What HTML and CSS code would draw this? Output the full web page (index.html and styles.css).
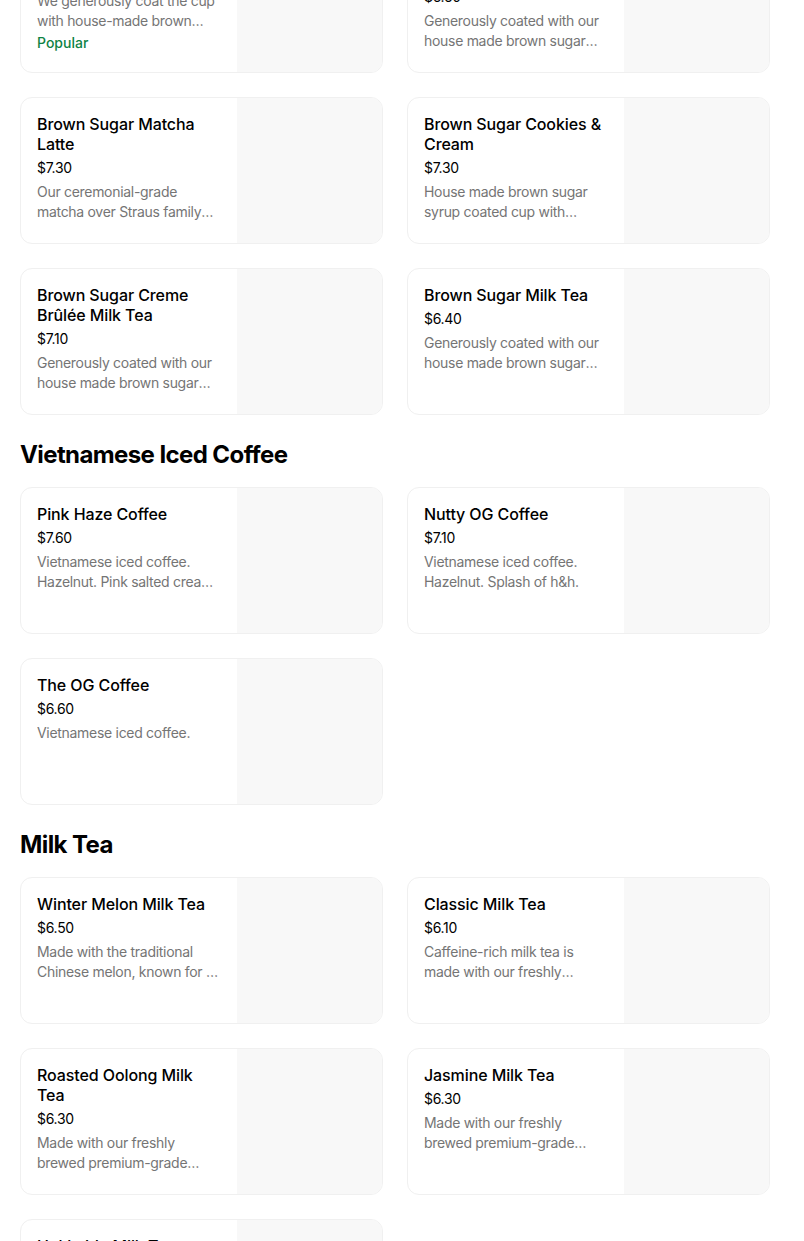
FILE: index.html
```html
<!DOCTYPE html>
<html lang="en">
<head>
<meta charset="utf-8">
<title>Menu</title>
<link rel="stylesheet" href="styles.css">
</head>
<body>
<main class="menu">
  <section class="section section-first">
    <div class="grid">
      <div class="card">
        <div class="info">
          <div class="title">Brown Sugar Boba Latte</div>
          <div class="price">$6.90</div>
          <div class="desc">We generously coat the cup with house-made brown sugar syrup and add our fresh boba.</div>
          <div class="tag">Popular</div>
        </div>
        <div class="thumb"></div>
      </div>
      <div class="card">
        <div class="info">
          <div class="title">Brown Sugar Boba Milk Tea Latte</div>
          <div class="price">$6.60</div>
          <div class="desc">Generously coated with our house made brown sugar syrup and fresh boba.</div>
        </div>
        <div class="thumb"></div>
      </div>
      <div class="card">
        <div class="info">
          <div class="title">Brown Sugar Matcha Latte</div>
          <div class="price">$7.30</div>
          <div class="desc">Our ceremonial-grade matcha over Straus family farm milk with brown sugar.</div>
        </div>
        <div class="thumb"></div>
      </div>
      <div class="card">
        <div class="info">
          <div class="title">Brown Sugar Cookies &amp; Cream</div>
          <div class="price">$7.30</div>
          <div class="desc">House made brown sugar syrup coated cup with cookies and cream.</div>
        </div>
        <div class="thumb"></div>
      </div>
      <div class="card">
        <div class="info">
          <div class="title">Brown Sugar Creme Brûlée Milk Tea</div>
          <div class="price">$7.10</div>
          <div class="desc">Generously coated with our house made brown sugar syrup and creme brûlée foam.</div>
        </div>
        <div class="thumb"></div>
      </div>
      <div class="card">
        <div class="info">
          <div class="title">Brown Sugar Milk Tea</div>
          <div class="price">$6.40</div>
          <div class="desc">Generously coated with our house made brown sugar syrup and milk tea.</div>
        </div>
        <div class="thumb"></div>
      </div>
    </div>
  </section>

  <section class="section">
    <h2 class="heading">Vietnamese Iced Coffee</h2>
    <div class="grid">
      <div class="card">
        <div class="info">
          <div class="title">Pink Haze Coffee</div>
          <div class="price">$7.60</div>
          <div class="desc">Vietnamese iced coffee. Hazelnut. Pink salted cream foam on top.</div>
        </div>
        <div class="thumb"></div>
      </div>
      <div class="card">
        <div class="info">
          <div class="title">Nutty OG Coffee</div>
          <div class="price">$7.10</div>
          <div class="desc">Vietnamese iced coffee. Hazelnut. Splash of h&amp;h.</div>
        </div>
        <div class="thumb"></div>
      </div>
      <div class="card">
        <div class="info">
          <div class="title">The OG Coffee</div>
          <div class="price">$6.60</div>
          <div class="desc">Vietnamese iced coffee.</div>
        </div>
        <div class="thumb"></div>
      </div>
    </div>
  </section>

  <section class="section">
    <h2 class="heading">Milk Tea</h2>
    <div class="grid">
      <div class="card">
        <div class="info">
          <div class="title">Winter Melon Milk Tea</div>
          <div class="price">$6.50</div>
          <div class="desc">Made with the traditional Chinese melon, known for its cooling properties.</div>
        </div>
        <div class="thumb"></div>
      </div>
      <div class="card">
        <div class="info">
          <div class="title">Classic Milk Tea</div>
          <div class="price">$6.10</div>
          <div class="desc">Caffeine-rich milk tea is made with our freshly brewed black tea.</div>
        </div>
        <div class="thumb"></div>
      </div>
      <div class="card">
        <div class="info">
          <div class="title">Roasted Oolong Milk Tea</div>
          <div class="price">$6.30</div>
          <div class="desc">Made with our freshly brewed premium-grade roasted oolong tea.</div>
        </div>
        <div class="thumb"></div>
      </div>
      <div class="card">
        <div class="info">
          <div class="title">Jasmine Milk Tea</div>
          <div class="price">$6.30</div>
          <div class="desc">Made with our freshly brewed premium-grade jasmine green tea.</div>
        </div>
        <div class="thumb"></div>
      </div>
      <div class="card">
        <div class="info">
          <div class="title">Hokkaido Milk Tea</div>
          <div class="price">$6.60</div>
          <div class="desc">Made with our freshly brewed black tea and caramel notes.</div>
        </div>
        <div class="thumb"></div>
      </div>
    </div>
  </section>
</main>
</body>
</html>
```

FILE: styles.css
```css
* { box-sizing: border-box; }

html, body {
  margin: 0;
  padding: 0;
  background: #ffffff;
}

body {
  font-family: Inter, "Noto Sans", "Liberation Sans", sans-serif;
  color: #000000;
  overflow: hidden;
}

.menu {
  width: 750px;
  margin-left: 20px;
}

.section-first {
  margin-top: -74px;
}

.heading {
  margin: 24px 0 16px;
  font-size: 24px;
  line-height: 32px;
  font-weight: 700;
  letter-spacing: -0.6px;
}

.grid {
  display: grid;
  grid-template-columns: 1fr 1fr;
  gap: 24px;
}

.card {
  display: flex;
  height: 147px;
  border: 1px solid #f0f0f0;
  border-radius: 12px;
  overflow: hidden;
  background: #ffffff;
}

.info {
  flex: 1;
  min-width: 0;
  padding: 16px;
}

.title {
  font-size: 16px;
  line-height: 20px;
  font-weight: 500;
  color: #000000;
  letter-spacing: -0.1px;
}

.price {
  margin-top: 4px;
  font-size: 14px;
  line-height: 20px;
  color: #000000;
  letter-spacing: -0.3px;
}

.desc {
  margin-top: 4px;
  font-size: 14px;
  line-height: 20px;
  color: #757575;
  letter-spacing: -0.3px;
  display: -webkit-box;
  -webkit-line-clamp: 2;
  -webkit-box-orient: vertical;
  overflow: hidden;
}

.tag {
  margin-top: 4px;
  font-size: 14px;
  line-height: 16px;
  font-weight: 500;
  color: #0e8345;
}

.thumb {
  flex: 0 0 145px;
  height: 145px;
  background: #f8f8f8;
}
```
